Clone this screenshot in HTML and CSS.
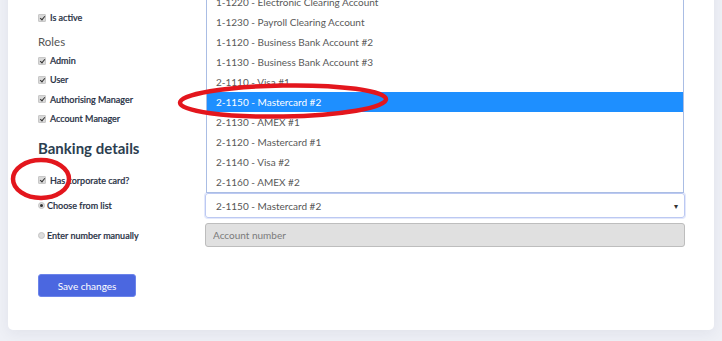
FILE: index.html
```html
<!DOCTYPE html>
<html lang="en">
<head>
    <meta charset="UTF-8">
    <title>Edit user – Banking details</title>
    <link rel="stylesheet" href="styles.css">
</head>
<body>
    <div class="card">
        <div class="check-row"><span class="box"></span>Is active</div>

        <div class="group-title">Roles</div>
        <div class="roles">
            <div class="check-row"><span class="box"></span>Admin</div>
            <div class="check-row"><span class="box"></span>User</div>
            <div class="check-row"><span class="box"></span>Authorising Manager</div>
            <div class="check-row"><span class="box"></span>Account Manager</div>
        </div>

        <h2>Banking details</h2>

        <div class="bank-grid">
            <div class="check-row corp"><span class="box"></span>Has corporate card?</div>
            <div></div>

            <div class="radio-row"><span class="radio on"></span>Choose from list</div>
            <div class="select-wrap">
                <ul class="options">
                    <li>1-1200 - Business Bank Account</li>
                    <li>1-1210 - Undeposited Funds</li>
                    <li>1-1220 - Electronic Clearing Account</li>
                    <li>1-1230 - Payroll Clearing Account</li>
                    <li>1-1120 - Business Bank Account #2</li>
                    <li>1-1130 - Business Bank Account #3</li>
                    <li>2-1110 - Visa #1</li>
                    <li class="selected">2-1150 - Mastercard #2</li>
                    <li>2-1130 - AMEX #1</li>
                    <li>2-1120 - Mastercard #1</li>
                    <li>2-1140 - Visa #2</li>
                    <li>2-1160 - AMEX #2</li>
                </ul>
                <div class="select">2-1150 - Mastercard #2<span class="caret">&#9662;</span></div>
            </div>

            <div class="radio-row"><span class="radio"></span>Enter number manually</div>
            <input class="acct" type="text" placeholder="Account number" disabled>
        </div>

        <button class="save">Save changes</button>
    </div>

    <!-- annotation marks drawn over the screenshot -->
    <svg class="marks" width="722" height="341" viewBox="0 0 722 341">
        <ellipse cx="283" cy="101" rx="103" ry="15.5" transform="rotate(-1 283 101)"/>
        <ellipse cx="41" cy="179" rx="28" ry="19"/>
    </svg>
</body>
</html>
```

FILE: styles.css
```css
html, body { height: 100%; overflow: hidden; }
body { margin: 0; background: #eef0f6; font-family: Lato, "Open Sans", sans-serif; color: #2c3e50; position: relative; }

.card { background: #fff; margin: -20px 8px 0 8px; padding: 28px 29px 33px 30px; border-radius: 5px; box-shadow: 0 4px 14px #1a22400f; }

.check-row, .radio-row { display: flex; align-items: center; font-size: 9px; font-weight: 500; color: #1f2d3f; height: 19px; -webkit-text-stroke: 0.2px #1f2d3f; }
.box { width: 8px; height: 8px; margin-right: 4px; background: #d9d9d9; border: 1px solid #c8c8c8; border-radius: 1px; position: relative; box-sizing: border-box; }
.box::after { content: ""; position: absolute; left: 2px; top: 0; width: 2px; height: 4px; border: solid #333; border-width: 0 1.4px 1.4px 0; transform: rotate(40deg); }

.group-title { font-size: 11.5px; color: #555; margin: 7px 0 2px; line-height: 15px; }
.roles .check-row:nth-child(3) { height: 20px; }

h2 { font-size: 15px; font-weight: 700; color: #2c3e50; margin: 10px 0 12px; line-height: 20px; }

.bank-grid { display: grid; grid-template-columns: 167px 1fr; row-gap: 5px; align-items: center; }
.corp { height: 20px; margin-bottom: -2px; }
.radio-row { height: 24px; }
.radio { width: 7px; height: 7px; border-radius: 50%; background: #dcdcdc; border: 1px solid #c4c4c4; margin-right: 2px; box-sizing: border-box; position: relative; }
.radio.on::after { content: ""; position: absolute; left: 1px; top: 1px; width: 3px; height: 3px; border-radius: 50%; background: #333; }

.select-wrap { position: relative; }
.select { height: 25px; box-sizing: border-box; border: 1px solid #bcc9f2; border-radius: 3px; padding: 0 10px; display: flex; align-items: center; font-size: 10px; color: #555; box-shadow: 0 0 0 1px #e3e8fb; }
.caret { margin-left: auto; font-size: 8px; color: #333; margin-right: -4px; }

.options { position: absolute; left: 1px; right: 1px; bottom: 100%; margin: 0; padding: 0; list-style: none; background: #fff; border: 1px solid #aabde4; border-top: none; z-index: 2; }
.options li { height: 20px; line-height: 20px; padding-left: 9px; font-size: 10px; color: #595959; }
.options li.selected { background: #1e8fff; color: #fff; }

.acct { height: 24px; box-sizing: border-box; border: 1px solid #bdbdbd; border-radius: 3px; background: #e0e0e0; padding: 0 7px; font-family: inherit; font-size: 10px; width: 100%; }
.acct::placeholder { color: #7a7a7a; }

.save { margin-top: 27px; width: 98px; height: 23px; border: 1px solid #6c84ea; border-radius: 3px; background: #4b67e0; color: #fff; font-family: inherit; font-size: 10px; cursor: pointer; }

.marks { position: absolute; left: 0; top: 0; pointer-events: none; z-index: 5; }
.marks ellipse { fill: none; stroke: #e3161d; stroke-width: 4.5; }
```
